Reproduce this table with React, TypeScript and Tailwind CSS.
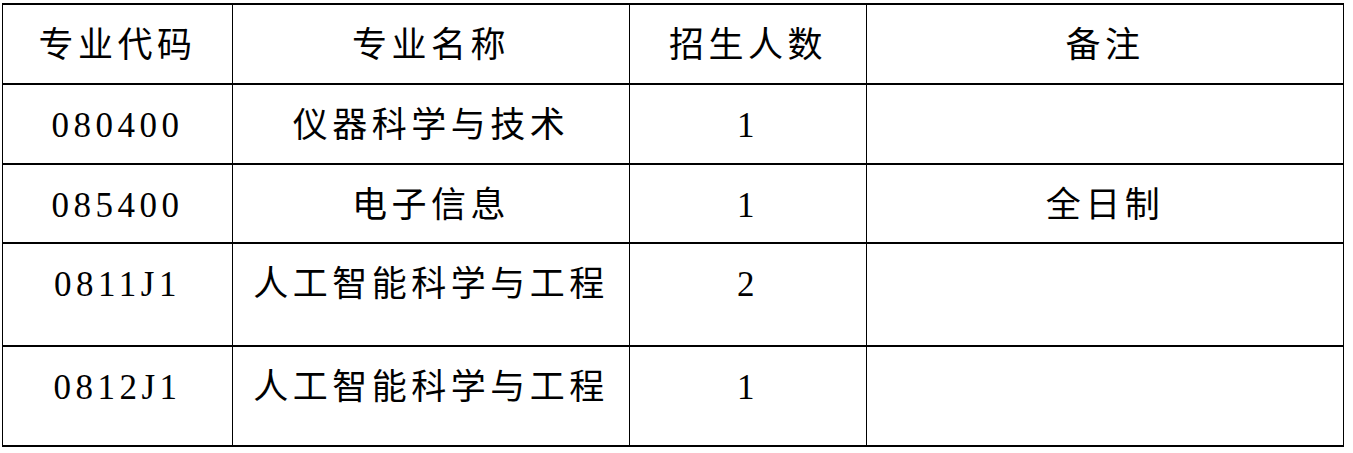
const font = { fontFamily: '"Liberation Serif", "Noto Sans CJK SC", serif' }

const columns = ['w-[230px]', 'w-[397px]', 'w-[237px]', 'w-[477px]']

const rows: { height: string; cells: string[] }[] = [
  { height: 'h-[80px]', cells: ['专业代码', '专业名称', '招生人数', '备注'] },
  { height: 'h-[80px]', cells: ['080400', '仪器科学与技术', '1', ''] },
  { height: 'h-[79px]', cells: ['085400', '电子信息', '1', '全日制'] },
  { height: 'h-[103px]', cells: ['0811J1', '人工智能科学与工程', '2', ''] },
  { height: 'h-[100px]', cells: ['0812J1', '人工智能科学与工程', '1', ''] },
]

export default function App() {
  return (
    <div className="w-[1353px] h-[453px] bg-white pt-[3px] pl-[2px]">
      <div
        className="w-[1342px] border-l border-t-2 border-black text-black text-[35px] tracking-[4.5px]"
        style={font}
      >
        {rows.map((row, i) => (
          <div key={i} className={`flex ${row.height} border-b-2 border-black`}>
            {row.cells.map((text, j) => (
              <div
                key={j}
                className={`${columns[j]} shrink-0 border-r border-black text-center pt-[19px] leading-[44px]`}
              >
                {text}
              </div>
            ))}
          </div>
        ))}
      </div>
    </div>
  )
}
